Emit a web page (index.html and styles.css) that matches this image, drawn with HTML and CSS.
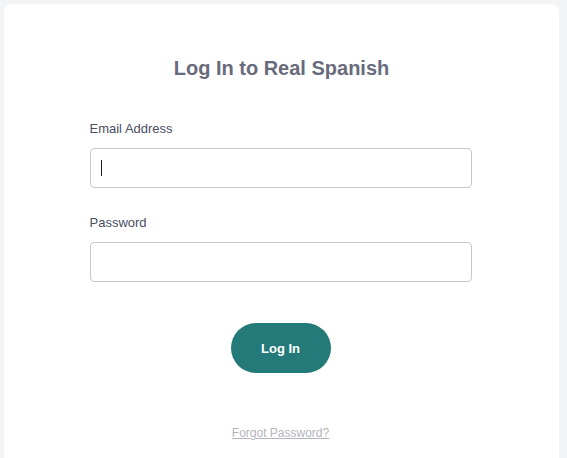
FILE: index.html
```html
<!DOCTYPE html>
<html>
<head>
<meta charset="utf-8">
<link rel="stylesheet" href="styles.css">
</head>
<body>
<div class="card">
  <h1 class="title">Log In to Real Spanish</h1>
  <form class="form">
    <label class="label" for="email">Email Address</label>
    <div class="input focused"><span class="caret"></span></div>
    <label class="label" for="pw">Password</label>
    <div class="input"></div>
    <div class="actions">
      <button type="button" class="btn">Log In</button>
    </div>
    <div class="forgot"><a href="#" class="forgot-link">Forgot Password?</a></div>
  </form>
</div>
</body>
</html>
```
FILE: styles.css
```css
html, body {
  margin: 0;
  padding: 0;
  background: #f3f4f6;
  font-family: "Liberation Sans", Arial, sans-serif;
}
body {
  padding: 4px 8px 0 4px;
  height: 458px;
  box-sizing: border-box;
  overflow: hidden;
}
.card {
  background: #ffffff;
  border-radius: 8px 8px 0 0;
  width: 555px;
  min-height: 460px;
  box-sizing: border-box;
  padding-top: 52px;
}
.title {
  margin: 0;
  text-align: center;
  font-size: 20px;
  line-height: 24px;
  font-weight: bold;
  color: #686b7c;
}
.form {
  width: 382px;
  margin: 0 auto;
  padding-top: 41px;
  display: flex;
  flex-direction: column;
  transform: translateX(-1px);
}
.label {
  display: block;
  font-size: 13px;
  line-height: 16px;
  color: #4a4e63;
  margin-bottom: 11px;
}
.input {
  height: 40px;
  border: 1px solid #c8c8cc;
  border-radius: 4px;
  box-sizing: border-box;
  margin-bottom: 27px;
  display: flex;
  align-items: center;
  padding-left: 10px;
}
.caret {
  width: 1px;
  height: 16px;
  background: #1a1a2a;
}
.actions {
  display: flex;
  justify-content: center;
  padding-top: 14px;
}
.btn {
  width: 100px;
  height: 50px;
  border: none;
  border-radius: 25px;
  background: #237a78;
  color: #ffffff;
  font-family: "Liberation Sans", Arial, sans-serif;
  font-size: 13px;
  font-weight: bold;
  cursor: pointer;
}
.forgot {
  text-align: center;
  padding-top: 52px;
  line-height: 14px;
}
.forgot-link {
  font-size: 12px;
  color: #b4b4bc;
  text-decoration: underline;
}
```
